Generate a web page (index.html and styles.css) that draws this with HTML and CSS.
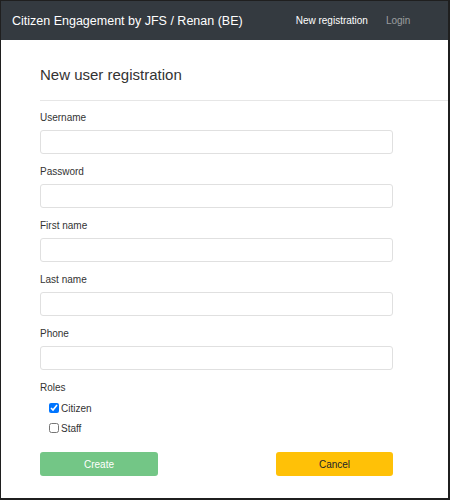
FILE: index.html
```html
<!DOCTYPE html>
<html>
<head>
<meta charset="utf-8">
<link rel="stylesheet" href="styles.css">
</head>
<body>
<div class="frame">
  <nav class="navbar">
    <span class="brand">Citizen Engagement by JFS / Renan (BE)</span>
    <div class="nav-links">
      <a class="nav-link active">New registration</a>
      <a class="nav-link">Login</a>
    </div>
  </nav>
  <main class="content">
    <h1 class="title">New user registration</h1>
    <hr class="divider">
    <form class="form">
      <div class="group">
        <label class="label">Username</label>
        <input class="input" type="text">
      </div>
      <div class="group">
        <label class="label">Password</label>
        <input class="input" type="password">
      </div>
      <div class="group">
        <label class="label">First name</label>
        <input class="input" type="text">
      </div>
      <div class="group">
        <label class="label">Last name</label>
        <input class="input" type="text">
      </div>
      <div class="group">
        <label class="label">Phone</label>
        <input class="input" type="text">
      </div>
      <div class="group roles">
        <span class="label">Roles</span>
        <label class="check"><input type="checkbox" checked> Citizen</label>
        <label class="check"><input type="checkbox"> Staff</label>
      </div>
      <div class="actions">
        <button type="button" class="btn btn-create">Create</button>
        <span></span>
        <button type="button" class="btn btn-cancel">Cancel</button>
      </div>
    </form>
  </main>
</div>
</body>
</html>
```

FILE: styles.css
```css
* { box-sizing: border-box; }
html, body { margin: 0; padding: 0; }
body {
  font-family: "Liberation Sans", Arial, sans-serif;
  color: #333;
  background: #fff;
}
.frame {
  width: 450px;
  height: 500px;
  border-top: 1px solid #1f1f1f;
  border-left: 1px solid #1f1f1f;
  border-right: 2px solid #1f1f1f;
  border-bottom: 2px solid #1f1f1f;
  overflow: hidden;
}
.navbar {
  height: 39px;
  background: #343a40;
  display: flex;
  align-items: center;
  padding: 0 11px;
}
.brand {
  color: #fff;
  font-size: 12.5px;
  line-height: 16px;
  white-space: nowrap;
}
.nav-links {
  display: flex;
  margin-left: 53px;
  gap: 18px;
}
.nav-link {
  color: rgba(255,255,255,0.5);
  font-size: 10px;
  line-height: 15px;
  white-space: nowrap;
}
.nav-link.active { color: #fff; }
.content {
  padding: 26px 0 0 39px;
}
.title {
  font-size: 15px;
  font-weight: normal;
  line-height: 18px;
  margin: 0;
  color: #333;
}
.divider {
  border: 0;
  border-top: 1px solid #e6e6e6;
  margin: 16px -20px 9px 0;
}
.form {
  width: 353px;
}
.group {
  margin-bottom: 10px;
}
.label {
  display: block;
  font-size: 10px;
  line-height: 15px;
  margin-bottom: 5px;
  color: #333;
}
.input {
  display: block;
  width: 100%;
  height: 24px;
  border: 1px solid #e0e0e0;
  border-radius: 3px;
  background: #fff;
  margin: 0;
  padding: 0 6px;
}
.roles .label { margin-bottom: 3px; }
.check {
  display: flex;
  align-items: center;
  height: 20px;
  padding-left: 9px;
  font-size: 10px;
  color: #333;
}
.check input {
  width: 10px;
  height: 10px;
  margin: 0 2px 0 0;
}
.actions {
  display: grid;
  grid-template-columns: 118px 1fr 117px;
  margin-top: 14px;
}
.btn {
  height: 24px;
  border: 0;
  border-radius: 3px;
  font-family: "Liberation Sans", Arial, sans-serif;
  font-size: 10px;
  padding: 0;
}
.btn-create {
  background: #73c686;
  color: #fff;
}
.btn-cancel {
  background: #ffc107;
  color: #212529;
}
```
